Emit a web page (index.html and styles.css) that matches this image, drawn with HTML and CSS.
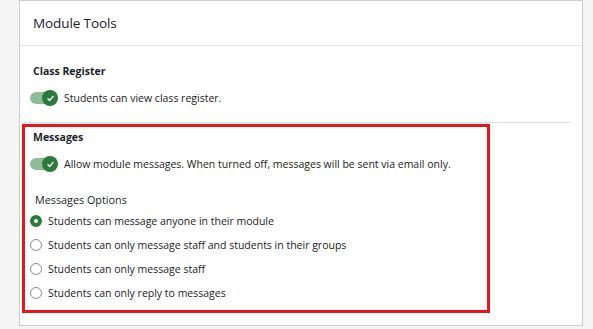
FILE: index.html
```html
<!DOCTYPE html>
<html lang="en">
<head>
  <meta charset="UTF-8">
  <meta name="viewport" content="width=device-width, initial-scale=1.0">
  <title>Module Tools</title>
  <link rel="stylesheet" href="styles.css">
</head>
<body>

  <div class="panel">
    <div class="panel-header">
      <h1>Module Tools</h1>
    </div>

    <div class="panel-body">
      <div class="tool">
        <h2>Class Register</h2>
        <label class="switch-row">
          <span class="switch">
            <span class="knob">
              <svg viewBox="0 0 16 16" width="9" height="9"><path d="M3.5 8.5l3 3 6-7" fill="none" stroke="#fff" stroke-width="2.4" stroke-linecap="round" stroke-linejoin="round"/></svg>
            </span>
          </span>
          Students can view class register.
        </label>
      </div>

      <hr class="divider">

      <div class="tool highlight">
        <h2>Messages</h2>
        <label class="switch-row">
          <span class="switch">
            <span class="knob">
              <svg viewBox="0 0 16 16" width="9" height="9"><path d="M3.5 8.5l3 3 6-7" fill="none" stroke="#fff" stroke-width="2.4" stroke-linecap="round" stroke-linejoin="round"/></svg>
            </span>
          </span>
          Allow module messages. When turned off, messages will be sent via email only.
        </label>

        <h3>Messages Options</h3>
        <div class="options">
          <label class="option"><span class="radio checked"></span>Students can message anyone in their module</label>
          <label class="option"><span class="radio"></span>Students can only message staff and students in their groups</label>
          <label class="option"><span class="radio"></span>Students can only message staff</label>
          <label class="option"><span class="radio"></span>Students can only reply to messages</label>
        </div>
      </div>
    </div>
  </div>

</body>
</html>
```

FILE: styles.css
```css
body {
  font-family: 'Open Sans', 'Noto Sans', sans-serif;
  margin: 0;
  background: #f5f5f5;
  color: #1c1c1c;
}

.panel {
  box-sizing: border-box;
  width: 564px;
  height: 326px;
  margin-left: 19px;
  background: #fff;
  border: 1px solid #cdcdcd;
}

.panel-header {
  height: 44px;
  display: flex;
  align-items: center;
  padding-left: 13px;
  border-bottom: 1px solid #e1e8ea;
}

.panel-header h1 {
  margin: 0;
  font-size: 13.5px;
  font-weight: 500;
  letter-spacing: -0.1px;
  color: #1a2030;
}

.panel-body {
  padding: 17px 11px 0 2px;
}

.tool {
  padding-left: 8px;
}

.tool h2 {
  margin: 0 0 0 3px;
  font-size: 10.5px;
  line-height: 16px;
  font-weight: 700;
  color: #1a1f2b;
}

.switch-row {
  display: flex;
  align-items: center;
  height: 16px;
  margin-top: 11px;
  font-size: 10.5px;
}

.switch {
  position: relative;
  width: 22px;
  height: 12px;
  margin-right: 12px;
  border-radius: 6px;
  background: #8fbd9a;
}

/* knob sits over the right end of the track */
.knob {
  position: absolute;
  left: 12px;
  top: -2px;
  width: 16px;
  height: 16px;
  border-radius: 50%;
  background: #2a7a3b;
  display: flex;
  align-items: center;
  justify-content: center;
}

.divider {
  border: none;
  border-top: 1px solid #dedede;
  margin: 16px 0 1px;
}

.highlight {
  box-sizing: border-box;
  width: 468px;
  height: 189px;
  border: 3px solid #e8161c;
  padding: 2px 0 0 5px;
}

.highlight h3 {
  margin: 20px 0 1px 5px;
  font-size: 10.8px;
  line-height: 16px;
  font-weight: 500;
  color: #1a1f2b;
}

.option {
  display: flex;
  align-items: center;
  height: 24px;
  font-size: 10.5px;
}

.radio {
  box-sizing: border-box;
  width: 12px;
  height: 12px;
  margin-right: 6px;
  border-radius: 50%;
  border: 1px solid #8c8c8c;
}

.radio.checked {
  border: 4px solid #2a7a3b;
  background: #fff;
}
```
